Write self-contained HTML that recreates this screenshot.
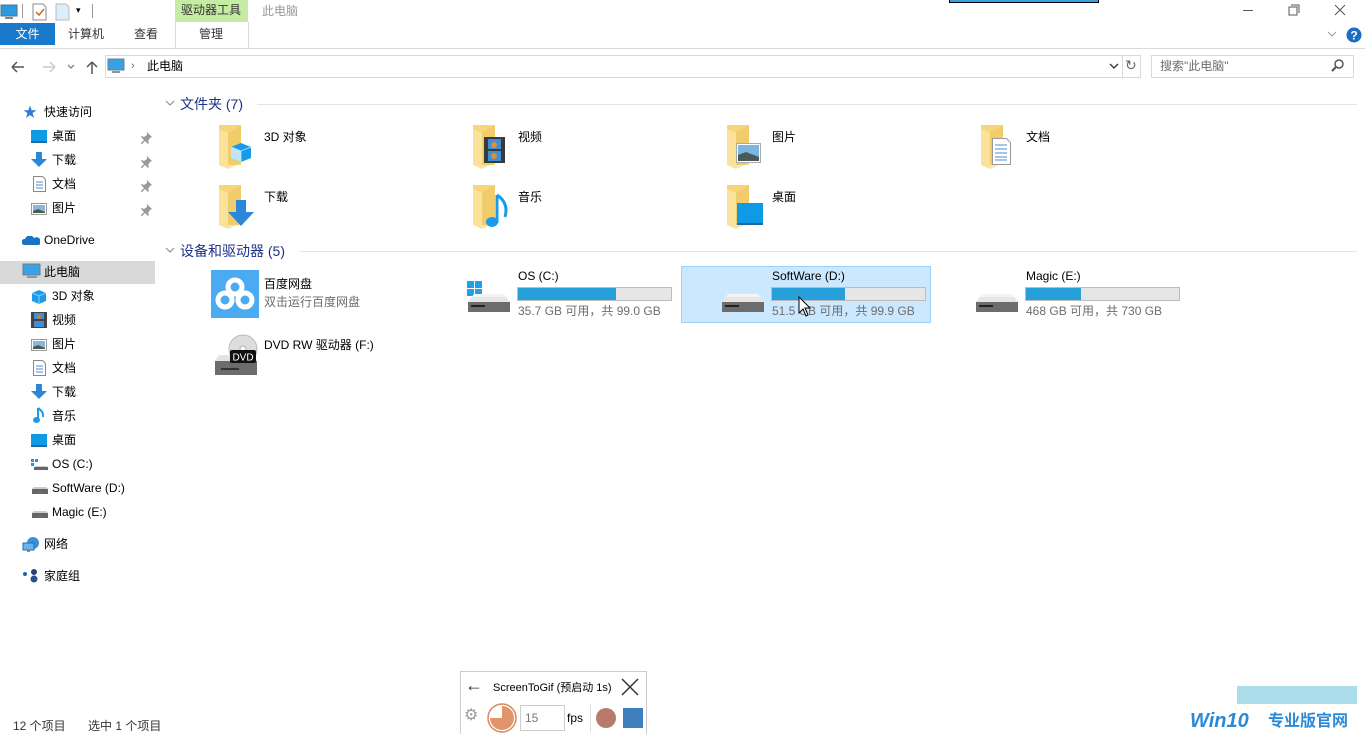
<!DOCTYPE html>
<html><head><meta charset="utf-8"><style>
*{margin:0;padding:0;box-sizing:border-box}
body{width:1365px;height:734px;background:#fff;position:relative;overflow:hidden;font-family:"Liberation Sans","Noto Sans CJK SC",sans-serif;font-size:12px;color:#000}
.a{position:absolute;white-space:nowrap;line-height:15px}
.g{color:#6d6d6d}
.hdr{color:#1e3287;font-size:14px;line-height:18px}
.bar{position:absolute;height:14px;background:#e6e6e6;border:1px solid #bcbcbc}
.bar i{display:block;height:100%;background:#26a0da}
</style></head><body>
<svg width="0" height="0" style="position:absolute"><defs>
<g id="fd"><path d="M0 0h22v40H0z" fill="#f7d57a"/><path d="M0 4l9 4v36l-9-4z" fill="#fbe29b"/><path d="M22 0v38l-13 6V8z" fill="#e9bf52" opacity=".4"/></g>
<g id="pin"><path d="M6 1l5 5-2 1-2 3 1 2-1 1-3-3-3 3-1 0 0-1 3-3-3-3 1-1 2 1 3-2z" fill="#9a9a9a"/></g>
<g id="drv"><path d="M3 12h42v10H3z" fill="#6c6c6c"/><path d="M9 4h30l6 8H3z" fill="#e6e6e6"/><path d="M9 4h30l2 3H7z" fill="#f4f4f4"/><rect x="6" y="15" width="14" height="2" fill="#222"/></g>
</defs></svg>
<!-- title bar -->
<svg class="a" style="left:0;top:4px" width="20" height="16"><rect x="1" y="1" width="16" height="11" fill="#2b9ae0" stroke="#5a6f80"/><rect x="5" y="13" width="8" height="2" fill="#7a8a96"/></svg>
<div class="a" style="left:22px;top:4px;width:1px;height:14px;background:#999"></div>
<svg class="a" style="left:32px;top:3px" width="16" height="18"><path d="M1 1h10l3 3v13H1z" fill="#fff" stroke="#888"/><path d="M4 9l3 3 5-6" stroke="#d06a1f" fill="none" stroke-width="1.5"/></svg>
<svg class="a" style="left:55px;top:3px" width="16" height="18"><path d="M1 1h10l3 3v13H1z" fill="#dbeefa" stroke="#bbb"/></svg>
<div class="a" style="left:76px;top:3px;font-size:9px">▾</div>
<div class="a" style="left:92px;top:4px;width:1px;height:14px;background:#999"></div>
<div class="a" style="left:175px;top:0;width:73px;height:22px;background:#c6eba2"></div>
<div class="a" style="left:181px;top:3px;color:#333">驱动器工具</div>
<div class="a g" style="left:262px;top:4px;color:#999">此电脑</div>
<div class="a" style="left:949px;top:0;width:150px;height:3px;background:#3aa0e0;border:1px solid #000;border-top:none"></div>
<div class="a" style="left:1243px;top:10px;width:10px;height:1px;background:#555"></div>
<svg class="a" style="left:1288px;top:4px" width="12" height="12"><path d="M3 1h8v8M1 3h8v8H1z" fill="none" stroke="#555"/></svg>
<svg class="a" style="left:1334px;top:4px" width="12" height="12"><path d="M1 1l10 10M11 1L1 11" stroke="#555"/></svg>
<!-- ribbon tabs -->
<div class="a" style="left:0;top:23px;width:55px;height:22px;background:#1979ca;color:#fff;text-align:center;line-height:22px">文件</div>
<div class="a" style="left:68px;top:27px;color:#333">计算机</div>
<div class="a" style="left:134px;top:27px;color:#333">查看</div>
<div class="a" style="left:175px;top:22px;width:74px;height:27px;border-left:1px solid #dadada;border-right:1px solid #dadada"></div>
<div class="a" style="left:199px;top:27px;color:#333">管理</div>
<div class="a" style="left:0;top:48px;width:1365px;height:1px;background:#dadada"></div>
<svg class="a" style="left:1327px;top:30px" width="10" height="8"><path d="M1 2l4 4 4-4" stroke="#999" fill="none"/></svg>
<svg class="a" style="left:1346px;top:27px" width="16" height="16"><circle cx="8" cy="8" r="7.5" fill="#1a6fc4"/><text x="8" y="12.5" font-size="12" font-weight="bold" fill="#fff" text-anchor="middle" font-family="Liberation Sans">?</text></svg>
<!-- nav -->
<svg class="a" style="left:10px;top:59px" width="100" height="16"><path d="M2 8h12M2 8l5-5M2 8l5 5" stroke="#555" stroke-width="1.5" fill="none"/><path d="M33 8h12M45 8l-5-5M45 8l-5 5" stroke="#ccc" stroke-width="1.5" fill="none"/><path d="M58 6l3 3 3-3" stroke="#666" fill="none"/><path d="M82 15V3M82 3l-5 5M82 3l5 5" stroke="#555" stroke-width="1.5" fill="none"/></svg>
<div class="a" style="left:105px;top:55px;width:1018px;height:23px;border:1px solid #d9d9d9"></div>
<svg class="a" style="left:107px;top:58px" width="20" height="17"><rect x="1" y="1" width="16" height="11" fill="#3aa2e4" stroke="#6c7e8c"/><rect x="5" y="13" width="8" height="2" fill="#8a98a4"/></svg>
<div class="a" style="left:131px;top:59px;color:#666;font-size:11px">›</div>
<div class="a" style="left:147px;top:59px">此电脑</div>
<svg class="a" style="left:1109px;top:62px" width="10" height="8"><path d="M1 2l4 4 4-4" stroke="#333" fill="none" stroke-width="1.3"/></svg>
<div class="a" style="left:1122px;top:55px;width:19px;height:23px;border:1px solid #d9d9d9"></div>
<div class="a" style="left:1125px;top:58px;color:#666;font-size:14px">↻</div>
<div class="a" style="left:1151px;top:55px;width:203px;height:23px;border:1px solid #d9d9d9"></div>
<div class="a g" style="left:1160px;top:59px">搜索"此电脑"</div>
<svg class="a" style="left:1331px;top:59px" width="14" height="14"><circle cx="8" cy="5" r="4" stroke="#555" fill="none" stroke-width="1.5"/><path d="M5 8l-4 4" stroke="#555" stroke-width="2"/></svg>
<!-- sidebar -->
<div class="a" style="left:0;top:261px;width:155px;height:23px;background:#d9d9d9"></div>
<div class="a" style="left:23px;top:105px;color:#2b7cd3;font-size:14px">★</div><div class="a" style="left:44px;top:105px">快速访问</div>
<svg class="a" style="left:31px;top:130px" width="16" height="13"><rect x="0" y="0" width="16" height="12" fill="#0f9ae6"/><rect x="0" y="11" width="16" height="2" fill="#1a6aa8"/></svg><div class="a" style="left:52px;top:129px">桌面</div>
<svg class="a" style="left:31px;top:152px" width="16" height="16"><path d="M5 0h6v7h5l-8 8-8-8h5z" fill="#2d87d8"/></svg><div class="a" style="left:52px;top:153px">下载</div>
<svg class="a" style="left:33px;top:176px" width="13" height="16"><path d="M.5.5h9l3 3v12H.5z" fill="#fff" stroke="#888"/><path d="M3 6h7M3 9h7M3 12h7" stroke="#4a8ed0"/></svg><div class="a" style="left:52px;top:177px">文档</div>
<svg class="a" style="left:31px;top:203px" width="16" height="12"><rect x=".5" y=".5" width="15" height="11" fill="#fff" stroke="#999"/><rect x="2" y="2" width="12" height="8" fill="#8ab6dc"/><path d="M2 8l5-2 7 3v1H2z" fill="#4a5a50"/></svg><div class="a" style="left:52px;top:201px">图片</div>
<svg class="a" style="left:141px;top:131px" width="13" height="13"><use href="#pin"/></svg>
<svg class="a" style="left:141px;top:155px" width="13" height="13"><use href="#pin"/></svg>
<svg class="a" style="left:141px;top:179px" width="13" height="13"><use href="#pin"/></svg>
<svg class="a" style="left:141px;top:203px" width="13" height="13"><use href="#pin"/></svg>
<svg class="a" style="left:22px;top:236px" width="18" height="10"><path d="M2 9a3 3 0 0 1 1-6 5 5 0 0 1 9-1 4 4 0 0 1 5 7z" fill="#1b73c4"/></svg><div class="a" style="left:44px;top:233px">OneDrive</div>
<svg class="a" style="left:22px;top:263px" width="20" height="17"><rect x="1" y="1" width="17" height="11" fill="#3aa2e4" stroke="#6c7e8c"/><rect x="5" y="13" width="10" height="2" fill="#8a98a4"/></svg><div class="a" style="left:44px;top:265px">此电脑</div>
<svg class="a" style="left:31px;top:289px" width="16" height="16"><path d="M8 1l7 3v8l-7 3-7-3V4z" fill="#1d9be8"/><path d="M1 4l7 3 7-3M8 7v8" stroke="#7fd0ff" fill="none"/></svg><div class="a" style="left:52px;top:289px">3D 对象</div>
<svg class="a" style="left:31px;top:312px" width="16" height="16"><rect x="0" y="0" width="16" height="16" fill="#444"/><rect x="3" y="1" width="10" height="6" fill="#3d8fd8"/><rect x="3" y="9" width="10" height="6" fill="#3d8fd8"/><circle cx="8" cy="5" r="2" fill="#d08030"/></svg><div class="a" style="left:52px;top:313px">视频</div>
<svg class="a" style="left:31px;top:339px" width="16" height="12"><rect x=".5" y=".5" width="15" height="11" fill="#fff" stroke="#999"/><rect x="2" y="2" width="12" height="8" fill="#8ab6dc"/><path d="M2 8l5-2 7 3v1H2z" fill="#4a5a50"/></svg><div class="a" style="left:52px;top:337px">图片</div>
<svg class="a" style="left:33px;top:360px" width="13" height="16"><path d="M.5.5h9l3 3v12H.5z" fill="#fff" stroke="#888"/><path d="M3 6h7M3 9h7M3 12h7" stroke="#4a8ed0"/></svg><div class="a" style="left:52px;top:361px">文档</div>
<svg class="a" style="left:31px;top:384px" width="16" height="16"><path d="M5 0h6v7h5l-8 8-8-8h5z" fill="#2d87d8"/></svg><div class="a" style="left:52px;top:385px">下载</div>
<svg class="a" style="left:33px;top:407px" width="12" height="17"><path d="M5 1v11" stroke="#1a9be8" stroke-width="2"/><ellipse cx="3.5" cy="13" rx="3.5" ry="3" fill="#1a9be8"/><path d="M5 1q6 4 5 9" stroke="#1a9be8" stroke-width="2" fill="none"/></svg><div class="a" style="left:52px;top:409px">音乐</div>
<svg class="a" style="left:31px;top:434px" width="16" height="13"><rect x="0" y="0" width="16" height="12" fill="#0f9ae6"/><rect x="0" y="11" width="16" height="2" fill="#1a6aa8"/></svg><div class="a" style="left:52px;top:433px">桌面</div>
<svg class="a" style="left:31px;top:459px" width="18" height="12"><rect x="0" y="0" width="3" height="3" fill="#1a9be8"/><rect x="4" y="0" width="3" height="3" fill="#1a9be8"/><rect x="0" y="4" width="3" height="3" fill="#1a9be8"/><path d="M3 8h14v3H3z" fill="#666"/><path d="M5 7h10l2 1H3z" fill="#ccc"/></svg><div class="a" style="left:52px;top:457px">OS (C:)</div>
<svg class="a" style="left:31px;top:485px" width="18" height="10"><path d="M1 4h16v5H1z" fill="#666"/><path d="M3 2h12l2 2H1z" fill="#ccc"/></svg><div class="a" style="left:52px;top:481px">SoftWare (D:)</div>
<svg class="a" style="left:31px;top:509px" width="18" height="10"><path d="M1 4h16v5H1z" fill="#666"/><path d="M3 2h12l2 2H1z" fill="#ccc"/></svg><div class="a" style="left:52px;top:505px">Magic (E:)</div>
<svg class="a" style="left:22px;top:537px" width="18" height="16"><circle cx="11" cy="6" r="6" fill="#3a8fd8"/><rect x="1" y="6" width="11" height="7" fill="#6ab4ee" stroke="#2a6aa8"/><rect x="5" y="13" width="3" height="2" fill="#888"/></svg><div class="a" style="left:44px;top:537px">网络</div>
<svg class="a" style="left:22px;top:569px" width="18" height="14"><circle cx="3" cy="5" r="2" fill="#1a6ab0"/><circle cx="12" cy="3" r="3" fill="#2d3f7a"/><circle cx="12" cy="10" r="3.5" fill="#2a4f8a"/></svg><div class="a" style="left:44px;top:569px">家庭组</div>
<!-- section headers -->
<svg class="a" style="left:165px;top:99px" width="10" height="8"><path d="M1 2l4 4 4-4" stroke="#888" fill="none"/></svg>
<div class="a hdr" style="left:180px;top:95px">文件夹 (7)</div>
<div class="a" style="left:257px;top:104px;width:1100px;height:1px;background:#e5e5e5"></div>
<svg class="a" style="left:165px;top:246px" width="10" height="8"><path d="M1 2l4 4 4-4" stroke="#888" fill="none"/></svg>
<div class="a hdr" style="left:180px;top:242px">设备和驱动器 (5)</div>
<div class="a" style="left:300px;top:251px;width:1057px;height:1px;background:#e5e5e5"></div>
<!-- folders -->
<svg class="a" style="left:219px;top:125px" width="40" height="45"><use href="#fd"/><path d="M22 18l10 4v11l-10 4-10-4V22z" fill="#1a9be8"/><path d="M12 22l10 4 10-4M22 26v11" stroke="#8fd8ff" fill="none"/><path d="M12 22l10 4v11l-10-4z" fill="#bfe6fb"/></svg>
<div class="a" style="left:264px;top:130px">3D 对象</div>
<svg class="a" style="left:473px;top:125px" width="40" height="45"><use href="#fd"/><rect x="11" y="12" width="21" height="26" fill="#3a3a3a"/><rect x="15" y="14" width="13" height="10" fill="#3d8fd8"/><rect x="15" y="26" width="13" height="10" fill="#3d8fd8"/><circle cx="21" cy="20" r="3" fill="#e0902f"/><circle cx="21" cy="31" r="3" fill="#e0902f"/></svg>
<div class="a" style="left:518px;top:130px">视频</div>
<svg class="a" style="left:727px;top:125px" width="42" height="45"><use href="#fd"/><rect x="9.5" y="18.5" width="24" height="19" fill="#fff" stroke="#aaa"/><rect x="11" y="20" width="21" height="16" fill="#7cb6e4"/><path d="M11 30l8-3 13 5v4H11z" fill="#4a5a56"/></svg>
<div class="a" style="left:772px;top:130px">图片</div>
<svg class="a" style="left:981px;top:125px" width="40" height="45"><use href="#fd"/><path d="M11.5 13.5h14l4 4v22h-18z" fill="#fff" stroke="#999"/><path d="M14 20h12M14 24h12M14 28h12M14 32h12M14 35h12" stroke="#4a8ed0"/></svg>
<div class="a" style="left:1026px;top:130px">文档</div>
<svg class="a" style="left:219px;top:185px" width="40" height="45"><use href="#fd"/><path d="M17 15h10v12h8L22 41 9 27h8z" fill="#2d87d8"/></svg>
<div class="a" style="left:264px;top:190px">下载</div>
<svg class="a" style="left:473px;top:185px" width="40" height="45"><use href="#fd"/><path d="M24 10v28" stroke="#1a9be8" stroke-width="3"/><ellipse cx="19" cy="37" rx="6" ry="5" fill="#1a9be8"/><path d="M24 10q12 8 8 22" stroke="#1a9be8" stroke-width="3" fill="none"/></svg>
<div class="a" style="left:518px;top:190px">音乐</div>
<svg class="a" style="left:727px;top:185px" width="42" height="45"><use href="#fd"/><rect x="10" y="18" width="26" height="21" fill="#0f9ae6"/><rect x="10" y="38" width="26" height="2" fill="#1a6aa8"/></svg>
<div class="a" style="left:772px;top:190px">桌面</div>
<!-- drives -->
<div class="a" style="left:681px;top:266px;width:250px;height:57px;background:#cce8ff;border:1px solid #99d1ff"></div>
<svg class="a" style="left:211px;top:270px" width="48" height="48"><rect width="48" height="48" fill="#4aabf3"/><circle cx="24" cy="17" r="7" fill="none" stroke="#fff" stroke-width="5"/><circle cx="14" cy="30" r="7" fill="none" stroke="#fff" stroke-width="5"/><circle cx="34" cy="30" r="7" fill="none" stroke="#fff" stroke-width="5"/></svg>
<div class="a" style="left:264px;top:277px">百度网盘</div>
<div class="a g" style="left:264px;top:295px">双击运行百度网盘</div>
<svg class="a" style="left:213px;top:333px" width="46" height="46"><circle cx="30" cy="16" r="14" fill="#ddd" stroke="#bbb"/><circle cx="30" cy="16" r="3" fill="#fff" stroke="#aaa"/><path d="M2 28h42v14H2z" fill="#6c6c6c"/><path d="M6 22h34l4 6H2z" fill="#e3e3e3"/><rect x="17" y="17" width="26" height="13" rx="2" fill="#111"/><text x="30" y="27.5" fill="#fff" font-size="10" text-anchor="middle" font-family="Liberation Sans">DVD</text><rect x="8" y="35" width="18" height="2" fill="#333"/></svg>
<div class="a" style="left:264px;top:338px">DVD RW 驱动器 (F:)</div>
<svg class="a" style="left:465px;top:280px" width="48" height="34"><rect x="2" y="1" width="7" height="7" fill="#1ea0ea"/><rect x="10" y="1" width="7" height="7" fill="#1ea0ea"/><rect x="2" y="9" width="7" height="7" fill="#1ea0ea"/><rect x="10" y="9" width="7" height="7" fill="#1ea0ea"/><g transform="translate(0,10)"><use href="#drv"/></g></svg>
<div class="a" style="left:518px;top:269px">OS (C:)</div>
<div class="bar" style="left:517px;top:287px;width:155px"><i style="width:64%"></i></div>
<div class="a g" style="left:518px;top:304px">35.7 GB 可用，共 99.0 GB</div>
<svg class="a" style="left:719px;top:290px" width="48" height="26"><use href="#drv"/></svg>
<div class="a" style="left:772px;top:269px">SoftWare (D:)</div>
<div class="bar" style="left:771px;top:287px;width:155px"><i style="width:48%"></i></div>
<div class="a g" style="left:772px;top:304px">51.5 GB 可用，共 99.9 GB</div>
<svg class="a" style="left:798px;top:296px" width="14" height="22"><path d="M1 1v16l4-4 3 7 2-1-3-7h5z" fill="#fff" stroke="#000"/></svg>
<svg class="a" style="left:973px;top:290px" width="48" height="26"><use href="#drv"/></svg>
<div class="a" style="left:1026px;top:269px">Magic (E:)</div>
<div class="bar" style="left:1025px;top:287px;width:155px"><i style="width:36%"></i></div>
<div class="a g" style="left:1026px;top:304px">468 GB 可用，共 730 GB</div>
<!-- status -->
<div class="a" style="left:13px;top:719px;color:#333">12 个项目</div>
<div class="a" style="left:88px;top:719px;color:#333">选中 1 个项目</div>
<!-- screentogif -->
<div class="a" style="left:460px;top:671px;width:187px;height:63px;background:#fff;border:1px solid #ccc;border-bottom:none"></div>
<div class="a" style="left:465px;top:678px;font-size:18px;color:#333">←</div>
<div class="a" style="left:493px;top:681px;font-size:11px">ScreenToGif (预启动 1s)</div>
<svg class="a" style="left:621px;top:678px" width="18" height="18"><path d="M1 1l16 16M17 1L1 17" stroke="#333" stroke-width="1.5"/></svg>
<div class="a" style="left:464px;top:708px;color:#999;font-size:16px">⚙</div>
<svg class="a" style="left:487px;top:703px" width="30" height="30"><circle cx="15" cy="15" r="14" fill="#fff" stroke="#d9865a" stroke-width="1.5"/><path d="M15 15V3a12 12 0 1 1-12 12z" fill="#e0956a"/></svg>
<div class="a" style="left:520px;top:705px;width:45px;height:26px;border:1px solid #ccc"></div>
<div class="a" style="left:525px;top:711px;color:#777">15</div>
<div class="a" style="left:567px;top:711px">fps</div>
<div class="a" style="left:590px;top:704px;width:1px;height:28px;background:#ddd"></div>
<div class="a" style="left:596px;top:708px;width:20px;height:20px;border-radius:50%;background:#b87a6c"></div>
<div class="a" style="left:623px;top:708px;width:20px;height:20px;background:#3d7fbf"></div>
<!-- watermark -->
<div class="a" style="left:1237px;top:686px;width:120px;height:18px;background:#aadcea"></div>
<div class="a" style="left:1190px;top:710px;font-size:20px;line-height:22px;font-weight:bold;font-style:italic;color:#2a8ad8">Win10</div>
<div class="a" style="left:1268px;top:712px;font-size:16px;line-height:20px;font-weight:bold;color:#2a8ad8">专业版官网</div>
</body></html>
